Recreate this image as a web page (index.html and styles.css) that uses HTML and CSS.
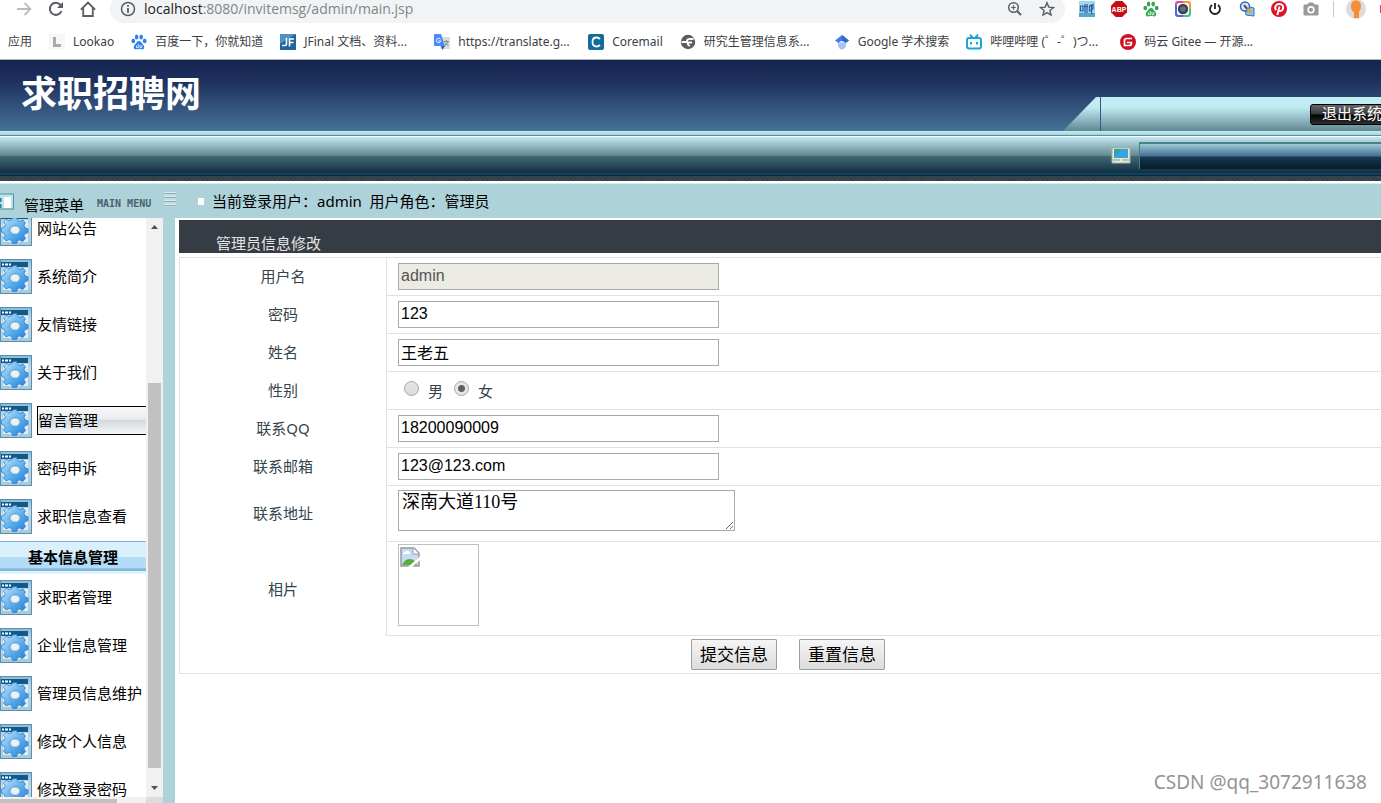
FILE: index.html
```
<!DOCTYPE html>
<html lang="zh-CN">
<head>
<meta charset="utf-8">
<title>求职招聘网</title>
<link rel="stylesheet" href="styles.css">
</head>
<body>
<svg class="defs" width="0" height="0" aria-hidden="true">
  <defs>
    <linearGradient id="tile" x1="0" y1="0" x2="0" y2="1"><stop offset="0" stop-color="#8fb8cf"/><stop offset=".4" stop-color="#cfe2ec"/><stop offset="1" stop-color="#a5c8db"/></linearGradient>
    <linearGradient id="gearfill" x1="0" y1="0" x2="1" y2="1"><stop offset="0" stop-color="#c4e6fb"/><stop offset=".45" stop-color="#6bb8f2"/><stop offset="1" stop-color="#1a78d6"/></linearGradient>
    <symbol id="gear" viewBox="0 0 32 35">
      <rect x=".5" y=".5" width="31" height="34" fill="url(#tile)" stroke="#5590b4"/>
      <path d="M1 9H3V31H29V9" fill="none" stroke="#a9cadd"/>
      <rect x="3" y="9" width="25" height="22" fill="#e4f0f6"/>
      <path d="M3 15H28M3 21H28M3 27H28M9 9V31M15 9V31M21 9V31" stroke="#cbdde8"/>
      <rect x="1" y="3" width="27" height="5" fill="#0d5b86"/>
      <path d="M2 5.500h2M5 5.500h3M9 5.500h2" stroke="#fff" stroke-width="2"/>
      <path transform="translate(0 -1)" fill="url(#gearfill)" stroke="#3384c4" stroke-width=".8" fill-rule="evenodd" d="M12.500 8l4-.5 1.200 3 2.300.8 3-1.300 2.500 3-1.500 2.500 1 2.300 3 1v4l-3 .8-1 2.200 1.500 3-3 2.800-3-1.700-2 .9-1 2.700h-4l-1-3-2.400-1-3 1.500-2.600-2.800 1.500-2.700-1-2.500-2.500-1v-3.800l2.800-1 1-2.400L3.400 12l2.800-2.800L9 10.900l2.500-1zM15 15.500c-3 0-5.200 2-5.200 4.500s2.200 4.500 5.200 4.500 5.200-2 5.200-4.500-2.200-4.500-5.200-4.500z"/>
      <ellipse cx="15" cy="19" rx="4.500" ry="3.800" fill="#eaf2f6" stroke="#a7c8dd"/>
    </symbol>
    <symbol id="paw" viewBox="0 0 16 16">
      <ellipse cx="2.300" cy="7" rx="1.900" ry="2.300"/><ellipse cx="5.600" cy="3" rx="1.800" ry="2.500"/><ellipse cx="10.200" cy="3" rx="1.800" ry="2.500"/><ellipse cx="13.700" cy="7" rx="1.900" ry="2.300"/>
      <path d="M8 7c2 0 2.500 2 4 3.500 2 2 1.500 5-1 5-1.500 0-2-.4-3-.4s-1.500.4-3 .4c-2.500 0-3-3-1-5C5.500 9 6 7 8 7z"/>
      <path d="M5.500 11.500v2.200h1.800v-3.700M9 11v2.700h1.800V11" fill="none" stroke="#fff" stroke-width=".8"/>
    </symbol>
  </defs>
</svg>

<div class="toolbar">
  <button class="tool" aria-label="前进"><svg viewBox="0 0 16 16" fill="none" stroke="#b9bbbe" stroke-width="1.800"><path d="M1 8H14M8.500 2L14.500 8L8.500 14"/></svg></button>
  <button class="tool" aria-label="重新加载"><svg viewBox="0 0 16 16" fill="none" stroke="#5a5e63" stroke-width="2"><path d="M13.500 10A6 6 0 1 1 12.500 4"/><path d="M15 1V7H9z" fill="#5a5e63" stroke="none"/></svg></button>
  <button class="tool" aria-label="主页"><svg viewBox="0 0 16 16" fill="none" stroke="#5a5e63" stroke-width="1.800"><path d="M.8 8.700L8 1.500L15.200 8.700M3.200 7V15H12.800V7"/></svg></button>
  <div class="omnibox">
    <svg class="ico" viewBox="0 0 16 16" fill="none" stroke="#5a5e63" stroke-width="1.500"><circle cx="8" cy="8" r="6.500"/><path d="M8 7V12M8 4V5.700" stroke-width="1.800"/></svg>
    <span class="url"><b>localhost</b>:8080/invitemsg/admin/main.jsp</span>
    <svg class="ico" viewBox="0 0 16 16" fill="none" stroke="#5a5e63" stroke-width="1.500"><circle cx="6.500" cy="6.500" r="4.800"/><path d="M10 10L14 14" stroke-width="2"/><path d="M4.200 6.500H8.800M6.500 4.200V8.800" stroke-width="1.200"/></svg>
    <svg class="ico" viewBox="0 0 16 16" fill="none" stroke="#5a5e63" stroke-width="1.400"><path d="M8 1.800L9.800 6.100L14.500 6.500L10.900 9.500L12 14.100L8 11.600L4 14.100L5.100 9.500L1.500 6.500L6.200 6.100z"/></svg>
  </div>
  <div class="extensions">
    <svg class="ico" viewBox="0 0 16 16"><rect width="16" height="16" fill="#a9d4ee"/><path d="M0 12H16V16H0z" fill="#5ba2c9"/><path d="M1.500 5H4V10H1.500zM6 3V12M5 5.500H9M8 3V12M10.500 5L14 3.500V8L10.500 10zM12.500 4V13" fill="none" stroke="#235f9e" stroke-width="1.200"/></svg>
    <svg class="ico" viewBox="0 0 16 16"><path d="M4.700 0H11.300L16 4.700V11.300L11.300 16H4.700L0 11.300V4.700z" fill="#c40d14"/><text class="abp" x="8" y="10.500" text-anchor="middle">ABP</text></svg>
    <svg class="ico" fill="#38a552"><use href="#paw"/></svg>
    <svg class="ico" viewBox="0 0 16 16"><path d="M0 3Q0 0 3 0H8V8z" fill="#e94a91"/><path d="M8 0H13Q16 0 16 3V8H8z" fill="#f39a32"/><path d="M16 8V13Q16 16 13 16H8V8z" fill="#40c48b"/><path d="M8 16H3Q0 16 0 13V3L8 8z" fill="#5066dc"/><rect x="2" y="2" width="12" height="12" rx="2" fill="#fff"/><circle cx="8" cy="8" r="5.200" fill="#39434e"/><circle cx="8" cy="8" r="2.800" fill="#5d7186"/></svg>
    <svg class="ico" viewBox="0 0 16 16" fill="none" stroke="#222" stroke-width="1.800"><path d="M5 4A5 5 0 1 0 11 4M8 2V8"/></svg>
    <svg class="ico" viewBox="0 0 16 16"><path d="M6 5L15 7V15L7 14z" fill="#8dc6ec" stroke="#3974ae"/><circle cx="6" cy="5.500" r="4.500" fill="#d8edff" stroke="#3268b8" stroke-width="1.500"/><path d="M6 5L12 12" stroke="#e6a03a" stroke-width="2.500"/><path d="M5 4L8 8" stroke="#334d84" stroke-width="2"/></svg>
    <svg class="ico" viewBox="0 0 16 16"><circle cx="8" cy="8" r="8" fill="#df1326"/><path d="M5 9.200C2.800 5.500 5.500 3 8.300 3c3 0 4.500 2.200 3.700 4.700-.8 2.400-3.200 3-4.300 1.600M8.500 5.500L6.300 14" fill="none" stroke="#fff" stroke-width="1.900"/></svg>
    <svg class="ico" viewBox="0 0 16 16"><path d="M1 4H4.500L6 2H10L11.500 4H15V14H1z" fill="#999" stroke="#999" stroke-linejoin="round"/><circle cx="8" cy="8.800" r="2.900" fill="none" stroke="#fff" stroke-width="1.600"/></svg>
  </div>
  <div class="profile">
    <svg class="avatar" viewBox="0 0 20 20"><circle cx="10" cy="10" r="10" fill="#dcdcdc"/><path d="M10 1.500c3.600 0 5.200 2.500 5 6-.2 3-1.500 4-2 5.500V19H8v-5.500C6 12 5 10 5 7.500c0-3.500 1.500-6 5-6z" fill="#f98d36"/></svg>
    <span class="update"></span>
  </div>
</div>

<nav class="bookmarks" aria-label="书签">
  <a href="#">应用</a>
  <a href="#"><svg class="ico" viewBox="0 0 16 16"><rect width="16" height="16" fill="#f7f7f7"/><path d="M4 3H7V10H12V13H4z" fill="#aaa"/></svg>Lookao</a>
  <a href="#"><svg class="ico" fill="#2f80e8"><use href="#paw"/></svg>百度一下，你就知道</a>
  <a href="#" class="wide"><svg class="ico" viewBox="0 0 16 16"><rect width="16" height="16" fill="#1d64a0"/><path d="M0 0H16L0 10z" fill="#4f91c3"/><path d="M2 11.500H5Q6.500 11.500 6.500 10V4M9.500 12.500V5H14M9.500 8.500H13.500" fill="none" stroke="#fff" stroke-width="1.600"/></svg>JFinal 文档、资料...</a>
  <a href="#" class="wide"><svg class="ico" viewBox="0 0 16 16"><rect x="6" y="3" width="10" height="12" fill="#ddd"/><path d="M0 1Q0 0 1 0H7L11 12H1Q0 12 0 11z" fill="#4b8bf5"/><path d="M7 12H11L8.500 16z" fill="#3358bd"/><path d="M6.500 5.200A2.200 2.200 0 1 0 6.800 7H4.700" fill="none" stroke="#fff"/><path d="M10 7.500H15M12.500 6V7.500M11 12L14 8M11 8.500L14.500 12" fill="none" stroke="#688" stroke-width=".9"/></svg>https://translate.g...</a>
  <a href="#"><svg class="ico" viewBox="0 0 16 16"><rect width="16" height="16" rx="2" fill="#126c9b"/><path d="M12 5Q10.500 3.500 8.500 3.500Q4.500 3.500 4.500 8T8.500 12.500Q10.500 12.500 12 11" fill="none" stroke="#fff" stroke-width="1.800"/></svg>Coremail</a>
  <a href="#" class="wide"><svg class="ico" viewBox="0 0 16 16"><circle cx="8" cy="8" r="7.200" fill="#5a5d61"/><path d="M1.500 8H5.500Q8 8 8 10T10 11.500M13.500 5H10Q7 5 7 7T10 8.500H12" fill="none" stroke="#fff" stroke-width="1.800"/></svg>研究生管理信息系...</a>
  <a href="#"><svg class="ico" viewBox="0 0 16 16"><path d="M4 8.500H12V12Q10.500 15.500 8 15.500T4 12z" fill="#a4c5fb"/><path d="M1 6.500L8 1L15 6.500L11.500 9Q10 7 8 7T4.500 9z" fill="#4080ea"/><path d="M8 1L15 6.500L11.500 9Q10 7 8 7z" fill="#3268c6"/></svg>Google 学术搜索</a>
  <a href="#" class="wide"><svg class="ico" viewBox="0 0 16 16" fill="none" stroke="#1ba6d8" stroke-width="2"><rect x="1" y="4" width="14" height="10.500" rx="2"/><path d="M4 .8L6.500 3.500M12 .8L9.500 3.500M5 8V10.500M11 8V10.500"/></svg>哔哩哔哩 (゜-゜)つ...</a>
  <a href="#" class="wide"><svg class="ico" viewBox="0 0 16 16"><circle cx="8" cy="8" r="8" fill="#d20f25"/><path d="M12 4.500H6.500Q4.500 4.500 4.500 6.500V11.500H9.500Q11.500 11.500 11.500 8.500H7" fill="none" stroke="#fff" stroke-width="1.700"/></svg>码云 Gitee — 开源...</a>
</nav>

<header class="banner">
  <h1>求职招聘网</h1>
  <div class="tab">
    <span class="slope"></span>
    <div class="tabbody"><button class="exit">退出系统</button></div>
  </div>
</header>
<div class="edge"></div>
<div class="ribbon">
  <svg class="monitor" viewBox="0 0 20 17"><path d="M1 1H19V16H1z" fill="#e4ebdd" stroke="#9fb3a4"/><rect x="3" y="2" width="14" height="9" fill="#3ca4dc"/><path d="M3 11V2H11z" fill="#359faa"/><path d="M2 13H9M11 13H18" stroke="#7d9c94"/></svg>
  <div class="slot"></div>
</div>
<div class="hatch"></div>

<div class="crumbs">
  <div class="menuhead">
    <svg class="panel" viewBox="0 0 14 17"><rect x="-3" y="1" width="16.500" height="15" fill="#bfe2e8" stroke="#4c92a6"/><rect x="4" y="4" width="7" height="11" fill="#fff"/><path d="M0 5V9M0 11V15" stroke="#2d8196" stroke-width="3"/></svg>
    <span class="menutitle">管理菜单</span><span class="menusub">MAIN MENU</span>
    <span class="grip"></span>
  </div>
  <span class="dot"></span>
  <span>当前登录用户：admin&nbsp; 用户角色：管理员</span>
</div>

<div class="frame">
  <aside class="sidebar">
    <nav class="menu" aria-label="管理菜单">
      <ul>
        <li><svg class="gear"><use href="#gear"/></svg><a href="#">网站公告</a></li>
        <li><svg class="gear"><use href="#gear"/></svg><a href="#">系统简介</a></li>
        <li><svg class="gear"><use href="#gear"/></svg><a href="#">友情链接</a></li>
        <li><svg class="gear"><use href="#gear"/></svg><a href="#">关于我们</a></li>
        <li><svg class="gear"><use href="#gear"/></svg><a href="#" class="active">留言管理</a></li>
        <li><svg class="gear"><use href="#gear"/></svg><a href="#">密码申诉</a></li>
        <li><svg class="gear"><use href="#gear"/></svg><a href="#">求职信息查看</a></li>
      </ul>
      <h2>基本信息管理</h2>
      <ul>
        <li><svg class="gear"><use href="#gear"/></svg><a href="#">求职者管理</a></li>
        <li><svg class="gear"><use href="#gear"/></svg><a href="#">企业信息管理</a></li>
        <li><svg class="gear"><use href="#gear"/></svg><a href="#">管理员信息维护</a></li>
        <li><svg class="gear"><use href="#gear"/></svg><a href="#">修改个人信息</a></li>
        <li><svg class="gear"><use href="#gear"/></svg><a href="#">修改登录密码</a></li>
      </ul>
    </nav>
    <div class="vbar"><span class="arrow up"></span><span class="thumb"></span><span class="arrow down"></span></div>
    <div class="hbar"><span class="hthumb"></span></div>
    <div class="corner"></div>
  </aside>

  <main class="content">
    <h2 class="band">管理员信息修改</h2>
    <form>
      <table>
        <tr><th><label for="user">用户名</label></th><td><input class="field" id="user" type="text" value="admin" disabled></td></tr>
        <tr><th><label for="pass">密码</label></th><td><input class="field" id="pass" type="text" value="123"></td></tr>
        <tr><th><label for="name">姓名</label></th><td><input class="field" id="name" type="text" value="王老五"></td></tr>
        <tr><th>性别</th><td><div class="radios"><label><input type="radio" name="sex">男</label><label><input type="radio" name="sex" checked>女</label></div></td></tr>
        <tr><th><label for="qq">联系QQ</label></th><td><input class="field" id="qq" type="text" value="18200090009"></td></tr>
        <tr><th><label for="mail">联系邮箱</label></th><td><input class="field" id="mail" type="text" value="123@123.com"></td></tr>
        <tr class="address"><th><label for="addr">联系地址</label></th><td><textarea id="addr">深南大道110号</textarea></td></tr>
        <tr class="photo"><th>相片</th><td><div class="picture"><svg viewBox="0 0 20 20" width="20" height="20"><path d="M1 1H14L19 6V19H1z" fill="#c6dbf6" stroke="#9a9a9a" stroke-width="1.500"/><path d="M3 7Q3 5 5 5Q6 3 8 4Q10 4 10 7z" fill="#fff"/><path d="M2 18Q5 11.500 10 12Q15 12 17 18z" fill="#56ad3a"/><path d="M13 1V7H19" fill="#fff" stroke="#9a9a9a"/><path d="M8 20L20 9.500V13L12 20z" fill="#fff"/></svg></div></td></tr>
        <tr class="actions"><td colspan="2"><div><button type="submit">提交信息</button><button type="reset">重置信息</button></div></td></tr>
      </table>
    </form>
  </main>
</div>
<div class="watermark">CSDN @qq_3072911638</div>
</body>
</html>
```
FILE: styles.css
```
* { box-sizing: border-box; }
body {
  margin: 0;
  height: 100vh;
  overflow: hidden;
  position: relative;
  display: flex;
  flex-direction: column;
  background: #fff;
  color: #000;
  font: 15px/20px "Noto Sans", "Noto Sans CJK SC", sans-serif;
}
.defs { position: absolute; }
a { color: inherit; text-decoration: none; }
button { font-family: inherit; }
h1, h2, ul { margin: 0; padding: 0; list-style: none; }
.ico { width: 16px; height: 16px; flex: none; }

/* browser chrome */
.toolbar {
  flex: none;
  display: flex;
  align-items: center;
  gap: 16px;
  height: 28px;
  margin-top: -5px;
  padding-left: 16px;
}
.tool { width: 16px; height: 16px; padding: 0; border: 0; background: none; display: flex; }
.tool svg { width: 16px; height: 16px; }
.omnibox {
  flex: 1;
  display: flex;
  align-items: center;
  gap: 16px;
  height: 28px;
  margin-left: -2px;
  padding: 0 10px;
  border-radius: 14px;
  background: #f1f3f4;
}
.url { flex: 1; margin-left: -8px; color: #80868b; font: 14px/20px "Open Sans", sans-serif; }
.url b { font-weight: 400; color: #202124; }
.extensions { display: flex; gap: 16px; margin-left: -2px; }
.abp { font: bold 7px "Liberation Sans", sans-serif; fill: #fff; }
.profile {
  display: flex;
  align-items: center;
  gap: 14px;
  margin-left: -2px;
  padding-left: 12px;
  border-left: 1px solid #c8cacd;
  height: 16px;
}
.avatar { width: 20px; height: 20px; }
.update { width: 1px; height: 8px; background: #e0503f; }
.bookmarks {
  flex: none;
  display: flex;
  align-items: center;
  gap: 17px;
  height: 37px;
  padding: 2px 8px 0;
  border-bottom: 1px solid #b0b2b5;
  font-size: 12px;
  line-height: 16px;
  color: #3c4043;
  white-space: nowrap;
}
.bookmarks a { display: flex; align-items: center; gap: 8px; flex: none; }
.bookmarks .wide { width: 137px; }

/* site header */
.banner {
  flex: none;
  display: flex;
  justify-content: space-between;
  height: 71px;
  background: linear-gradient(#152350, #1e315e 30%, #467198);
}
.banner h1 { padding: 7px 0 0 21px; color: #fff; font: bold 36px/48px "Noto Sans CJK SC", sans-serif; }
.tab { display: flex; align-self: flex-end; height: 34px; }
.slope { width: 37px; background: linear-gradient(#c1ecf4 30%, #5f8791); clip-path: polygon(33px 0, 100% 0, 100% 100%, 0 100%); }
.tabbody {
  width: 281px;
  padding: 6px 0 0 209px;
  overflow: hidden;
  border-left: 1px solid #355883;
  background: linear-gradient(#c1ecf4 30%, #5f8791);
}
.exit {
  width: 84px;
  height: 21px;
  padding: 0 0 2px 11px;
  border: 1px solid #000;
  border-radius: 3px;
  background: linear-gradient(#666, #383838 48%, #000 52%, #303030);
  color: #fff;
  font-size: 15px;
  line-height: 17px;
  text-align: left;
  white-space: nowrap;
}
.edge { flex: none; height: 5px; background: linear-gradient(#c4ecf5, #a4d4df 80%, #5f8e99 80%); }
.ribbon {
  flex: none;
  display: flex;
  align-items: center;
  justify-content: flex-end;
  gap: 8px;
  height: 39px;
  border-top: 1px solid #fff;
  border-bottom: 2px solid #074467;
  background: linear-gradient(#c1e9f1, #63868f 52%, #426a76 53%, #112f42);
}
.monitor { width: 20px; height: 17px; }
.slot {
  width: 242px;
  height: 27px;
  border: solid #4a7f8c;
  border-width: 2px 0 0 1px;
  background: linear-gradient(#9fcbd9, #446f91 48%, #173950 52%, #071c29);
}
.hatch {
  flex: none;
  height: 8px;
  border-top: 1px solid #14242f;
  border-bottom: 2px solid #fff;
  background: repeating-linear-gradient(45deg, #303b48 0 1px, #384553 1px 3px);
}
.crumbs {
  flex: none;
  display: flex;
  align-items: center;
  height: 35px;
  border-top: 1px solid #d7edf0;
  background: #add2da;
  white-space: nowrap;
}
.menuhead { display: flex; align-items: center; width: 198px; }
.panel { width: 14px; height: 17px; margin-right: 10px; }
.menutitle { padding-top: 8px; }
.menusub { padding: 6px 13px 0; color: #4c6068; font: bold 10px/12px "DejaVu Sans Mono", monospace; }
.grip { width: 12px; height: 15px; margin-bottom: 3px; background: repeating-linear-gradient(#dcebed 0 1px, #8badb5 1px 2px, #c4dde2 2px 4px); }
.dot { width: 6px; height: 7px; margin-right: 8px; background: #fff; }

/* page body */
.frame { flex: 1; display: flex; min-height: 0; }
.sidebar {
  flex: none;
  display: grid;
  grid-template: minmax(0, 1fr) 6px / 146px 17px;
  width: 175px;
  border-right: 12px solid #add2da;
}
.menu { overflow: hidden; white-space: nowrap; }
.menu ul:first-child { margin-top: -13px; }
.menu li { display: flex; align-items: center; gap: 5px; height: 48px; padding-bottom: 2px; }
.gear { flex: none; width: 32px; height: 35px; }
.menu .active {
  flex: none;
  width: 120px;
  height: 29px;
  border: 1px solid #000;
  line-height: 27px;
  background: linear-gradient(#f7f8f9, #e9ecef 45%, #d3d9de 50%, #f4f6f7);
}
.menu h2 {
  height: 33px;
  border-top: 1px solid #79b4d6;
  border-bottom: 3px solid #e0f2fa;
  background: linear-gradient(#d9f0fc 50%, #b3dcf6 52%, #b3dcf6 90%, #82b9da 92%);
  font-size: 15px;
  line-height: 31px;
  text-align: center;
}
.vbar { display: flex; flex-direction: column; align-items: center; background: #f1f1f1; }
.arrow { width: 7px; height: 4px; background: #505050; }
.up { margin: 7px 0 6px; clip-path: polygon(50% 0, 100% 100%, 0 100%); }
.down { order: 4; margin: 6px 0 7px; clip-path: polygon(0 0, 100% 0, 50% 100%); }
.thumb { order: 2; width: 13px; flex: 385; background: #c1c1c1; }
.vbar::before { content: ""; flex: 148; order: 1; }
.vbar::after { content: ""; flex: 12; order: 3; }
.hbar { background: #f1f1f1; padding-top: 2px; }
.hthumb { display: block; width: 80%; height: 4px; background: #c1c1c1; }
.corner { background: #dcdcdc; }

.content { flex: 1; min-width: 0; overflow: hidden; padding: 2px 0 0 4px; }
.band {
  height: 33px;
  padding: 13px 0 0 37px;
  background: #363c44;
  color: #e4e4e4;
  font-size: 15px;
  font-weight: 400;
  line-height: 20px;
}
form { margin: 4px -16px 0 0; }
table { width: 100%; border-collapse: collapse; border: 1px solid #dce5e5; color: #34444c; }
th { width: 207px; height: 38px; padding: 0 0 2px; font-weight: 400; text-align: center; }
td { padding: 0 0 0 11px; border: 1px solid #dce5e5; }
.field, textarea {
  display: block;
  margin: 0;
  border: 1px solid #a9a9a9;
  border-radius: 0;
  background: #fff;
  color: #000;
}
.field { width: 321px; height: 27px; padding: 0 2px 2px; font: 16px/20px "Liberation Sans", "Noto Sans CJK SC", sans-serif; }
.field:disabled { background: #ebebe4; color: #545454; }
.radios { display: flex; gap: 11px; padding-left: 6px; }
.radios label { display: flex; align-items: center; gap: 9px; }
.radios input {
  appearance: none;
  width: 15px;
  height: 15px;
  margin: 0 0 4px;
  border: 1px solid #a8a8a8;
  border-radius: 50%;
  background: linear-gradient(#e4e4e4, #dcdcdc);
}
.radios input:checked { background: radial-gradient(circle, #606060 3px, #e6e6e6 4px); }
.address th { height: 56px; }
.address td, .photo td { vertical-align: top; }
.address td { padding-top: 4px; }
textarea { width: 337px; height: 41px; padding: 0 3px; overflow: hidden; resize: both; font: 18px/22px "Liberation Serif", "Noto Sans CJK SC", serif; }
.photo th { height: 94px; padding: 0; }
.photo td { padding-top: 2px; }
.picture { width: 81px; height: 82px; padding: 2px 1px; border: 1px solid #c0c0c0; }
.picture svg { display: block; }
.actions td { height: 38px; padding: 0; border-top: 0; }
.actions div { display: flex; justify-content: center; gap: 22px; }
.actions button {
  height: 31px;
  padding: 0 8px;
  border: 1px solid #a0a0a0;
  border-radius: 1px;
  background: linear-gradient(#f5f5f5, #dcdcdc);
  color: #000;
  font-size: 17px;
  line-height: 28px;
}
.watermark {
  position: absolute;
  right: 14px;
  bottom: 8px;
  color: #949494;
  font-size: 19px;
  line-height: 26px;
}
```
